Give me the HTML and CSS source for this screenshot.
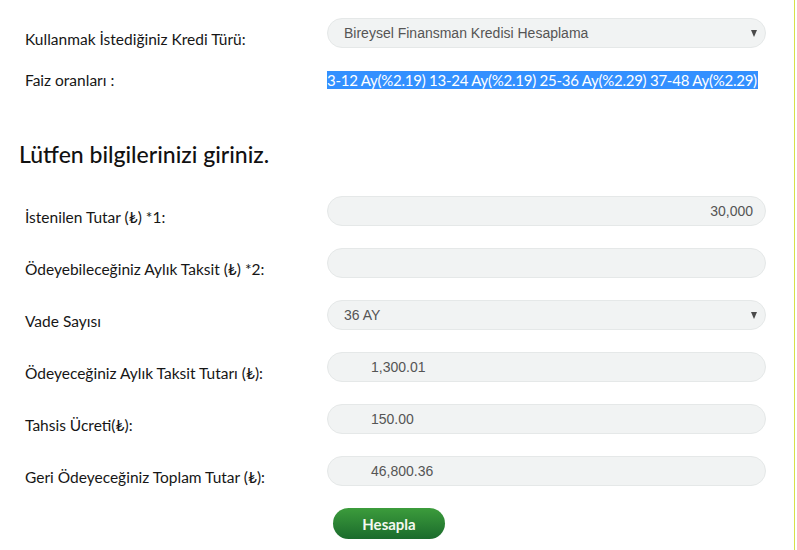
FILE: index.html
```html
<!DOCTYPE html>
<html lang="tr">
<head>
<meta charset="utf-8">
<title>Kredi Hesaplama</title>
<link rel="stylesheet" href="styles.css">
</head>
<body>
<div class="page">
  <div class="content">
    <div class="row row-first">
      <div class="label">Kullanmak İstediğiniz Kredi Türü:</div>
      <div class="field select">
        <span>Bireysel Finansman Kredisi Hesaplama</span>
        <span class="caret"></span>
      </div>
    </div>
    <div class="row row-rates">
      <div class="label">Faiz oranları :</div>
      <div class="rates"><span class="sel">3-12 Ay(%2.19) 13-24 Ay(%2.19) 25-36 Ay(%2.29) 37-48 Ay(%2.29)</span></div>
    </div>

    <h2 class="title">Lütfen bilgilerinizi giriniz.</h2>

    <div class="row">
      <div class="label">İstenilen Tutar (₺) *1:</div>
      <div class="field right">30,000</div>
    </div>
    <div class="row">
      <div class="label">Ödeyebileceğiniz Aylık Taksit (₺) *2:</div>
      <div class="field"></div>
    </div>
    <div class="row">
      <div class="label">Vade Sayısı</div>
      <div class="field select">
        <span>36 AY</span>
        <span class="caret"></span>
      </div>
    </div>
    <div class="row">
      <div class="label">Ödeyeceğiniz Aylık Taksit Tutarı (₺):</div>
      <div class="field readonly">1,300.01</div>
    </div>
    <div class="row">
      <div class="label">Tahsis Ücreti(₺):</div>
      <div class="field readonly">150.00</div>
    </div>
    <div class="row">
      <div class="label">Geri Ödeyeceğiniz Toplam Tutar (₺):</div>
      <div class="field readonly">46,800.36</div>
    </div>
    <div class="actions">
      <button class="btn">Hesapla</button>
    </div>
  </div>
</div>
</body>
</html>
```

FILE: styles.css
```css
html, body {
  margin: 0;
  padding: 0;
  background: #fff;
}
body {
  font-family: Lato, "Open Sans", sans-serif;
  color: #1a1a1a;
}
.page {
  width: 795px;
  height: 550px;
  border-right: 1px solid #d6e04a;
  box-sizing: border-box;
  overflow: hidden;
}
.content {
  padding: 18px 0 0 25px;
}
.row {
  display: flex;
  align-items: center;
  height: 30px;
  margin-bottom: 22px;
}
.row-first {
  margin-bottom: 17px;
}
.row-rates {
  margin-bottom: 0;
}
.label {
  width: 302px;
  flex: none;
  font-size: 15.5px;
  color: #161616;
  padding-top: 11px;
}
.row-rates .label {
  padding-top: 0;
}
.field {
  width: 439px;
  height: 30px;
  box-sizing: border-box;
  background: #f1f3f3;
  border: 1px solid #e5e8e8;
  border-radius: 15px;
  display: flex;
  align-items: center;
  padding: 0 16px;
  font-family: "Liberation Sans", Arial, sans-serif;
  font-size: 14px;
  color: #555;
}
.field.right {
  justify-content: flex-end;
  padding-right: 12px;
}
.field.readonly {
  padding-left: 43px;
}
.select {
  justify-content: space-between;
  padding-right: 8px;
}
.caret {
  width: 0;
  height: 0;
  border-left: 3px solid transparent;
  border-right: 3px solid transparent;
  border-top: 7px solid #4a4a4a;
  margin-top: 1px;
}
.rates {
  font-size: 15px;
  line-height: 20px;
}
.sel {
  background: #3390ff;
  color: #fff;
  letter-spacing: -0.25px;
  padding-right: 1px;
}
.title {
  margin: 44px 0 0 -6px;
  font-size: 23px;
  font-weight: 500;
  color: #111;
  height: 57px;
  line-height: 30px;
}
.actions {
  padding-left: 308px;
  margin-top: 0;
}
.btn {
  width: 112px;
  height: 31px;
  border: none;
  border-radius: 16px;
  background: linear-gradient(#3c9c3c, #1b6b2c);
  color: #f4f8f0;
  font-family: Lato, "Open Sans", sans-serif;
  font-weight: 700;
  font-size: 15px;
  padding: 0;
}
```
